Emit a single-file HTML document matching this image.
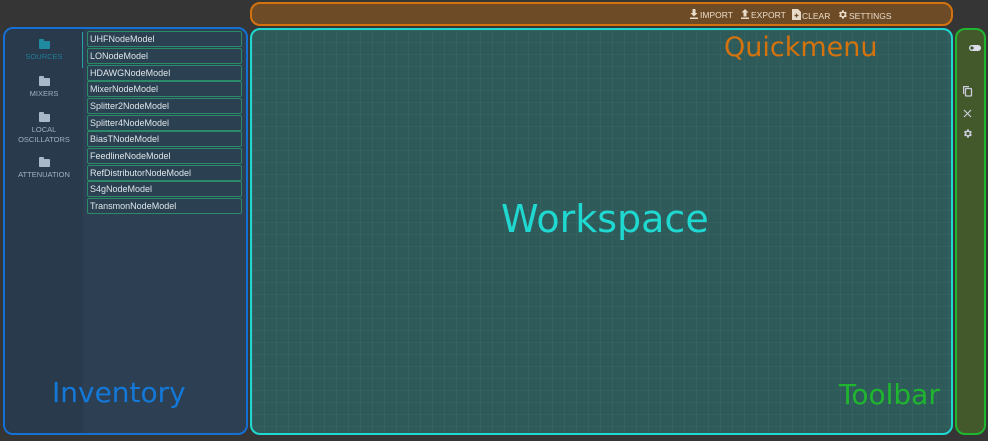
<!DOCTYPE html>
<html><head><style>
*{margin:0;padding:0;box-sizing:border-box}
body{width:988px;height:441px;background:#353535;position:relative;overflow:hidden;font-family:"Liberation Sans",sans-serif}
.p{position:absolute;border:2px solid;border-radius:10px}
#inv{left:3px;top:27px;width:245px;height:408px;border-color:#1470d2;background:#2c3f53;overflow:hidden}
#inv .side{position:absolute;left:0;top:0;width:78px;height:100%;background:#293a4c}
#qm{left:250px;top:2px;width:703px;height:24px;border-color:#d4730e;background:#6e4b27}
#ws{left:250px;top:28px;width:703px;height:407px;border-color:#1fd8d0;background-color:#2e5a5a;
background-image:linear-gradient(rgba(255,255,255,.035) 1px,transparent 1px),linear-gradient(90deg,rgba(255,255,255,.035) 1px,transparent 1px);background-size:12px 12px}
#tb{left:955px;top:28px;width:31px;height:407px;border-color:#1fb52f;background:#43592c}
.lbl{position:absolute;font-family:"DejaVu Sans",sans-serif;white-space:nowrap}
.cat{position:absolute;left:0;width:78px;text-align:center;font-size:7.5px;color:#9fb0c0;line-height:10px}
.cat .f{display:block;margin:0 auto 3px;width:11px;height:8px;background:#a8b8c8;border-radius:1px;position:relative}
.cat .f:before{content:"";position:absolute;left:0;top:-2px;width:5px;height:3px;background:inherit;border-radius:1px 1px 0 0}
.item{position:absolute;left:82px;width:155px;height:16px;border:1px solid #2b8a68;border-radius:2px;background:#2b4152;color:#e0e6ea;font-size:9px;line-height:14px;padding-left:2px}
.qi{position:absolute;top:9px;font-size:8.5px;color:#e8dcc8;line-height:10px;white-space:nowrap}
.qi svg{vertical-align:-1px;margin-right:1px}
</style></head><body>
<div id="inv" class="p"><div class="side"></div>
<div style="position:absolute;left:77px;top:3px;width:1px;height:36px;background:#2aa3a8"></div>
<div class="cat" style="top:12px;color:#1f7f9a"><span class="f" style="background:#1f8aa0"></span>SOURCES</div>
<div class="cat" style="top:49px"><span class="f"></span>MIXERS</div>
<div class="cat" style="top:85px"><span class="f"></span>LOCAL<br>OSCILLATORS</div>
<div class="cat" style="top:130px"><span class="f"></span>ATTENUATION</div>
<div class="item" style="top:2px">UHFNodeModel</div>
<div class="item" style="top:19px">LONodeModel</div>
<div class="item" style="top:36px">HDAWGNodeModel</div>
<div class="item" style="top:52px">MixerNodeModel</div>
<div class="item" style="top:69px">Splitter2NodeModel</div>
<div class="item" style="top:86px">Splitter4NodeModel</div>
<div class="item" style="top:102px">BiasTNodeModel</div>
<div class="item" style="top:119px">FeedlineNodeModel</div>
<div class="item" style="top:136px">RefDistributorNodeModel</div>
<div class="item" style="top:152px">S4gNodeModel</div>
<div class="item" style="top:169px">TransmonNodeModel</div>
<div class="lbl" style="left:47px;top:347px;font-size:28px;color:#1478d8">Inventory</div>
</div>
<div id="qm" class="p"></div>
<div class="qi" style="left:689px"><svg width="10" height="10" viewBox="0 0 10 10"><path d="M3.5 0h3v4h2L5 7.5 1.5 4h2z M1 8.5h8V10H1z" fill="#e8dcc8"/></svg>IMPORT</div>
<div class="qi" style="left:740px"><svg width="10" height="10" viewBox="0 0 10 10"><path d="M3.5 7.5h3v-4h2L5 0 1.5 3.5h2z M1 8.5h8V10H1z" fill="#e8dcc8"/></svg>EXPORT</div>
<div class="qi" style="left:792px"><svg width="9" height="11" viewBox="0 0 9 11"><path d="M0 0h6l3 3v8H0z" fill="#e8dcc8"/><path d="M2.5 6.5h4M4.5 4.5v4" stroke="#6e4b27" stroke-width="1.2"/></svg>CLEAR</div>
<div class="qi" style="left:837px"><svg width="11" height="11" viewBox="0 0 24 24"><path fill="#e8dcc8" d="M19.4 13a7.5 7.5 0 0 0 0-2l2.1-1.6-2-3.5-2.5 1a7.3 7.3 0 0 0-1.7-1L15 3h-4l-.4 2.7a7.3 7.3 0 0 0-1.7 1l-2.5-1-2 3.5L6.5 11a7.5 7.5 0 0 0 0 2l-2.1 1.6 2 3.5 2.5-1a7.3 7.3 0 0 0 1.7 1L11 21h4l.4-2.7a7.3 7.3 0 0 0 1.7-1l2.5 1 2-3.5zM13 15.5a3.5 3.5 0 1 1 0-7 3.5 3.5 0 0 1 0 7z"/></svg>SETTINGS</div>
<div id="ws" class="p">
<div class="lbl" style="left:472px;top:2px;font-size:27px;color:#d4730e">Quickmenu</div>
<div class="lbl" style="left:249px;top:167px;font-size:38px;color:#1fd8d0">Workspace</div>
<div class="lbl" style="left:587px;top:348px;font-size:28px;color:#1fb52f">Toolbar</div>
</div>
<div id="tb" class="p">
<svg style="position:absolute;left:12px;top:15px" width="12" height="6" viewBox="0 0 12 6"><rect width="12" height="6" rx="3" fill="#dde"/><circle cx="3" cy="3" r="1.6" fill="#43592c"/></svg>
<svg style="position:absolute;left:5px;top:55px" width="11" height="12" viewBox="0 0 11 12"><path d="M1 1h6v1.2H2.2V9H1z" fill="#ccd"/><rect x="3.5" y="3.5" width="6" height="7.5" rx="1" fill="none" stroke="#ccd" stroke-width="1.3"/></svg>
<svg style="position:absolute;left:6px;top:79px" width="9" height="9" viewBox="0 0 9 9"><path d="M1 1l7 7M8 1L1 8" stroke="#ccd" stroke-width="1.2"/></svg>
<svg style="position:absolute;left:5px;top:98px" width="11" height="11" viewBox="0 0 24 24"><path fill="#ccd" d="M19.4 13a7.5 7.5 0 0 0 0-2l2.1-1.6-2-3.5-2.5 1a7.3 7.3 0 0 0-1.7-1L15 3h-4l-.4 2.7a7.3 7.3 0 0 0-1.7 1l-2.5-1-2 3.5L6.5 11a7.5 7.5 0 0 0 0 2l-2.1 1.6 2 3.5 2.5-1a7.3 7.3 0 0 0 1.7 1L11 21h4l.4-2.7a7.3 7.3 0 0 0 1.7-1l2.5 1 2-3.5zM13 15.5a3.5 3.5 0 1 1 0-7 3.5 3.5 0 0 1 0 7z"/></svg>
</div>
</body></html>
